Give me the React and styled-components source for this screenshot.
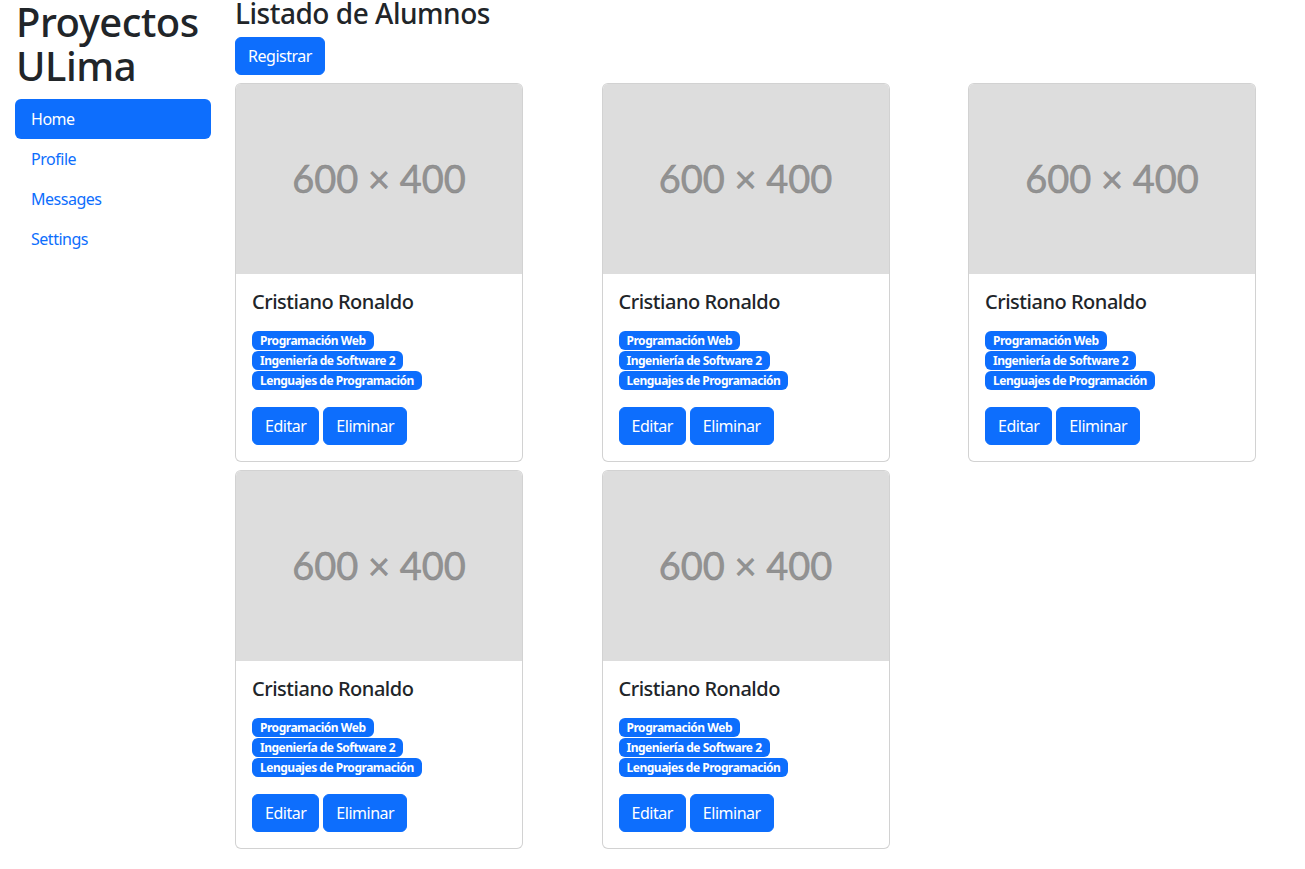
import styled, { createGlobalStyle } from 'styled-components'

const GlobalStyle = createGlobalStyle`
  *, *::before, *::after {
    box-sizing: border-box;
  }
  body {
    margin: 0;
    font-family: "Noto Sans", "Open Sans", sans-serif;
    font-size: 16px;
    line-height: 1.5;
    letter-spacing: -0.03em;
    color: #212529;
    background: #fff;
  }
`

const Page = styled.div`
  display: flex;
  gap: 24px;
  padding: 0 15px;
`

const Sidebar = styled.aside`
  width: 196px;
  flex-shrink: 0;
`

const Brand = styled.h1`
  margin: 0 0 11px 1px;
  font-size: 40px;
  font-weight: 500;
  line-height: 44px;
`

const Nav = styled.nav`
  display: flex;
  flex-direction: column;
`

const NavLink = styled.a`
  display: block;
  padding: 8px 16px;
  border-radius: 6px;
  text-decoration: none;
  font-size: 16px;
  line-height: 24px;
  color: ${(p) => (p.$active ? '#fff' : '#0d6efd')};
  background: ${(p) => (p.$active ? '#0d6efd' : 'transparent')};
`

const Main = styled.main`
  flex: 1;
`

const Title = styled.h3`
  margin: 0 0 11px;
  font-size: 28px;
  font-weight: 500;
  line-height: 26px;
`

const Button = styled.button`
  display: inline-block;
  padding: 6px 12px;
  border: 1px solid #0d6efd;
  border-radius: 6px;
  background: #0d6efd;
  color: #fff;
  font-family: inherit;
  font-size: 16px;
  line-height: 24px;
  letter-spacing: -0.03em;
  cursor: pointer;
`

const CardGrid = styled.div`
  display: grid;
  grid-template-columns: repeat(3, 288px);
  column-gap: 78.5px;
  row-gap: 8px;
  margin-top: 8px;
`

const Card = styled.div`
  border: 1px solid rgba(0, 0, 0, 0.175);
  border-radius: 6px;
  overflow: hidden;
  background: #fff;
`

const Placeholder = styled.div`
  height: 190px;
  background: #dddddd;
  display: flex;
  align-items: center;
  justify-content: center;
  font-family: Lato, "Noto Sans", sans-serif;
  font-size: 38px;
  letter-spacing: 0;
  color: #929292;
  -webkit-text-stroke: 0.5px #868686;
  padding-bottom: 2px;
`

const CardBody = styled.div`
  padding: 16px;
`

const CardTitle = styled.h5`
  margin: 0 0 17px;
  font-size: 20px;
  font-weight: 500;
  line-height: 24px;
`

const Badges = styled.div`
  display: flex;
  flex-direction: column;
  align-items: flex-start;
  gap: 1px;
  margin-bottom: 17px;
`

const Badge = styled.span`
  display: inline-block;
  padding: 0 8px;
  height: 19px;
  border-radius: 6px;
  background: #0d6efd;
  color: #fff;
  font-size: 12px;
  font-weight: 700;
  line-height: 19px;
  white-space: nowrap;
`

const Actions = styled.div`
  display: flex;
  gap: 4px;
`

const courses = ['Programación Web', 'Ingeniería de Software 2', 'Lenguajes de Programación']

const students = [1, 2, 3, 4, 5].map((id) => ({
  id,
  name: 'Cristiano Ronaldo',
  courses,
}))

const links = ['Home', 'Profile', 'Messages', 'Settings']

function StudentCard({ student }) {
  return (
    <Card>
      <Placeholder>600 × 400</Placeholder>
      <CardBody>
        <CardTitle>{student.name}</CardTitle>
        <Badges>
          {student.courses.map((c) => (
            <Badge key={c}>{c}</Badge>
          ))}
        </Badges>
        <Actions>
          <Button>Editar</Button>
          <Button>Eliminar</Button>
        </Actions>
      </CardBody>
    </Card>
  )
}

export default function App() {
  return (
    <>
      <GlobalStyle />
      <Page>
        <Sidebar>
          <Brand>Proyectos ULima</Brand>
          <Nav>
            {links.map((l, i) => (
              <NavLink key={l} href="#" $active={i === 0}>{l}</NavLink>
            ))}
          </Nav>
        </Sidebar>
        <Main>
          <Title>Listado de Alumnos</Title>
          <Button>Registrar</Button>
          <CardGrid>
            {students.map((s) => (
              <StudentCard key={s.id} student={s} />
            ))}
          </CardGrid>
        </Main>
      </Page>
    </>
  )
}
